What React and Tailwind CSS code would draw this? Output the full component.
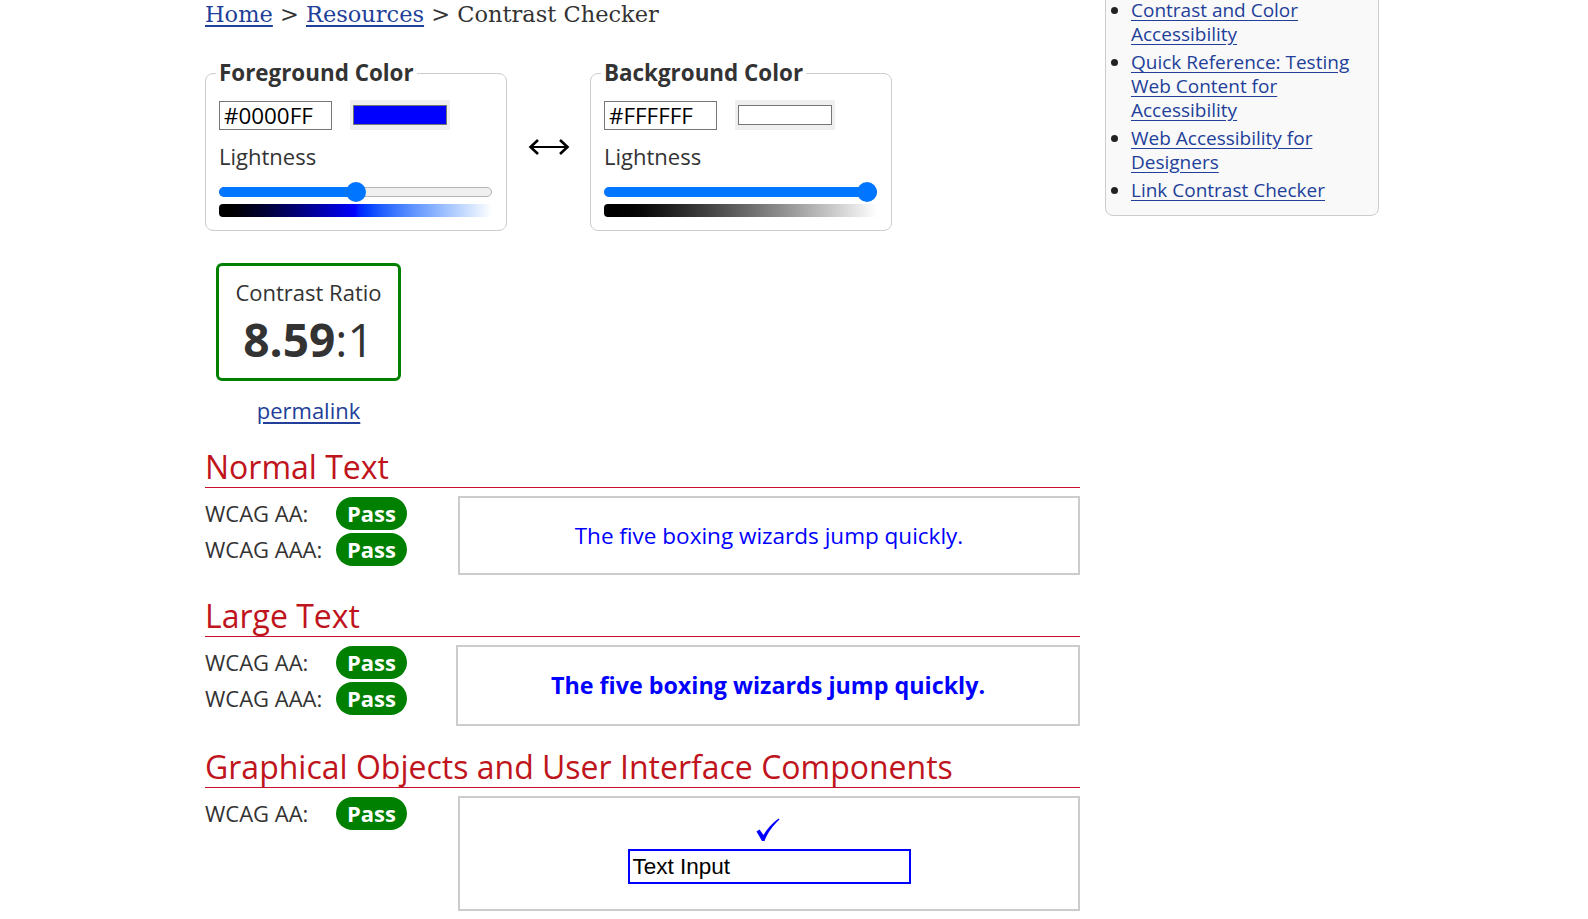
const sans = "font-['Open_Sans',sans-serif]";

function Swatch({ color }) {
  return (
    <div className="ml-[18px] h-[30px] w-[100px] bg-[#efefef] px-[3px] py-[5px]">
      <div className={`h-full w-full border border-[#767676] ${color}`}></div>
    </div>
  );
}

function ColorPicker({ title, hex, swatch, thumb, fill, gradient }) {
  return (
    <fieldset className="w-[302px] rounded-lg border border-[#ccc] pb-[13px] pl-[13px] pr-[14px]">
      <legend className="ml-[-3px] px-[3px] text-[22.4px] font-bold leading-[30px] text-[#333]">{title}</legend>
      <div className="mt-[12px] flex items-center">
        <input
          readOnly
          value={hex}
          className="h-[29px] w-[113px] border border-[#767676] bg-white px-[4px] text-[22.4px] leading-[27px] text-black outline-none"
        />
        <Swatch color={swatch} />
      </div>
      <div className="mt-[11px] text-[22px] leading-[30px] text-[#333]">Lightness</div>
      <div className="relative mt-[11px] h-[20px]">
        <div className="absolute left-0 right-0 top-[5px] h-[10px] rounded-full border border-[#b5b5b5] bg-[#efefef]"></div>
        <div className={`absolute left-0 top-[5px] h-[10px] rounded-full bg-[#0075ff] ${fill}`}></div>
        <div className={`absolute top-0 h-[20px] w-[20px] rounded-full bg-[#0075ff] ${thumb}`}></div>
      </div>
      <div className={`mt-[2px] h-[13px] rounded-l-[4px] bg-linear-to-r ${gradient}`}></div>
    </fieldset>
  );
}

function Pass() {
  return (
    <span className="flex h-[33px] w-[71px] items-center justify-center rounded-full bg-[#008000] text-[22px] font-bold text-white">
      Pass
    </span>
  );
}

function Row({ label }) {
  return (
    <div className="flex h-[33px] items-center">
      <span className="w-[131px] text-[22px] text-[#333]">{label}</span>
      <Pass />
    </div>
  );
}

function Section({ title, rows, children, boxClass, top = "mt-[21px]" }) {
  return (
    <section className={top}>
      <h2 className="border-b border-[#c8102e] text-[32px] leading-[40px] text-[#c0141c]">{title}</h2>
      <div className="mt-[8px] flex items-start">
        <div className="flex w-[253px] flex-col gap-[3px] pt-[1px]">
          {rows.map((r) => (
            <Row key={r} label={r} />
          ))}
        </div>
        <div className={`flex-1 border-2 border-[#ccc] ${boxClass}`}>{children}</div>
      </div>
    </section>
  );
}

export default function App() {
  const link = "text-[#223f99] underline underline-offset-[3px]";
  return (
    <div className={`min-h-[919px] overflow-hidden bg-white pl-[205px] ${sans}`}>
      <div className="flex items-start">
        <main className="w-[875px]">
          <nav className="pt-[1px] font-['DejaVu_Serif',serif] text-[22.5px] leading-[26px] text-[#333]">
            <a href="#" className={link}>Home</a> &gt; <a href="#" className={link}>Resources</a> &gt; Contrast Checker
          </nav>

          <div className="mt-[31px] flex items-center">
            <ColorPicker
              title="Foreground Color"
              hex="#0000FF"
              swatch="bg-[#0000ff]"
              thumb="left-[127px]"
              fill="w-[138px]"
              gradient="from-black via-[#0000ff] to-white"
            />
            <div className="flex w-[83px] justify-center pt-[4px]">
              <svg width="42" height="20" viewBox="0 0 42 20" fill="none" stroke="#000">
                <path d="M3 10 H39" strokeWidth="2" />
                <path d="M10 3 L2.5 10 L10 17 M32 3 L39.5 10 L32 17" strokeWidth="2.6" strokeLinejoin="miter" />
              </svg>
            </div>
            <ColorPicker
              title="Background Color"
              hex="#FFFFFF"
              swatch="bg-white"
              thumb="left-[253px]"
              fill="w-full"
              gradient="from-black to-white"
            />
          </div>

          <div className="ml-[11px] mt-[32px] flex h-[118px] w-[185px] flex-col items-center rounded-md border-[3px] border-[#008000] pt-[12px] text-[#333]">
            <div className="text-[22px] leading-[28px]">Contrast Ratio</div>
            <div className="mt-[7px] text-[46px] leading-[52px]">
              <span className="font-bold">8.59</span>:1
            </div>
          </div>
          <div className="ml-[11px] mt-[14px] w-[185px] text-center text-[22px] leading-[30px]">
            <a href="#" className={link}>permalink</a>
          </div>

          <Section top="mt-[22px]" title="Normal Text" rows={["WCAG AA:", "WCAG AAA:"]} boxClass="flex h-[79px] items-center justify-center">
            <span className="text-[22.5px] text-[#0000ff]">The five boxing wizards jump quickly.</span>
          </Section>

          <Section title="Large Text" rows={["WCAG AA:", "WCAG AAA:"]} boxClass="-ml-[2px] flex h-[81px] items-center justify-center">
            <span className="text-[23.3px] font-bold text-[#0000ff]">The five boxing wizards jump quickly.</span>
          </Section>

          <Section title="Graphical Objects and User Interface Components" rows={["WCAG AA:"]} boxClass="flex h-[115px] flex-col items-center pt-[20px]">
            <svg width="24" height="24" viewBox="0 0 24 24" className="ml-[-2px]">
              <path d="M0.5 13.5 L3.5 11.5 L7.5 17 C11 11 16 5 22.5 0.5 L23.5 1.5 C17 7.5 12 14 8.5 23 L6 23 Z" fill="#0000ff" />
            </svg>
            <div className="mt-[7px] h-[35px] w-[283px] border-2 border-[#0000ff] pl-[3px] font-['Liberation_Sans',Arial,sans-serif] text-[22.5px] leading-[31px] text-black">
              Text Input
            </div>
          </Section>
        </main>

        <aside className="-mt-[30px] ml-[25px] w-[274px] rounded-lg border border-[#ccc] bg-[#f9f9f9] pb-[13px] pl-[25px] pr-[14px] pt-[27px] text-[19px] leading-[24px]">
          <ul className="list-disc space-y-[4px] marker:text-[#222]">
            <li><a href="#" className={link}>Contrast and Color Accessibility</a></li>
            <li><a href="#" className={link}>Quick Reference: Testing Web Content for Accessibility</a></li>
            <li><a href="#" className={link}>Web Accessibility for Designers</a></li>
            <li><a href="#" className={link}>Link Contrast Checker</a></li>
          </ul>
        </aside>
      </div>
    </div>
  );
}
